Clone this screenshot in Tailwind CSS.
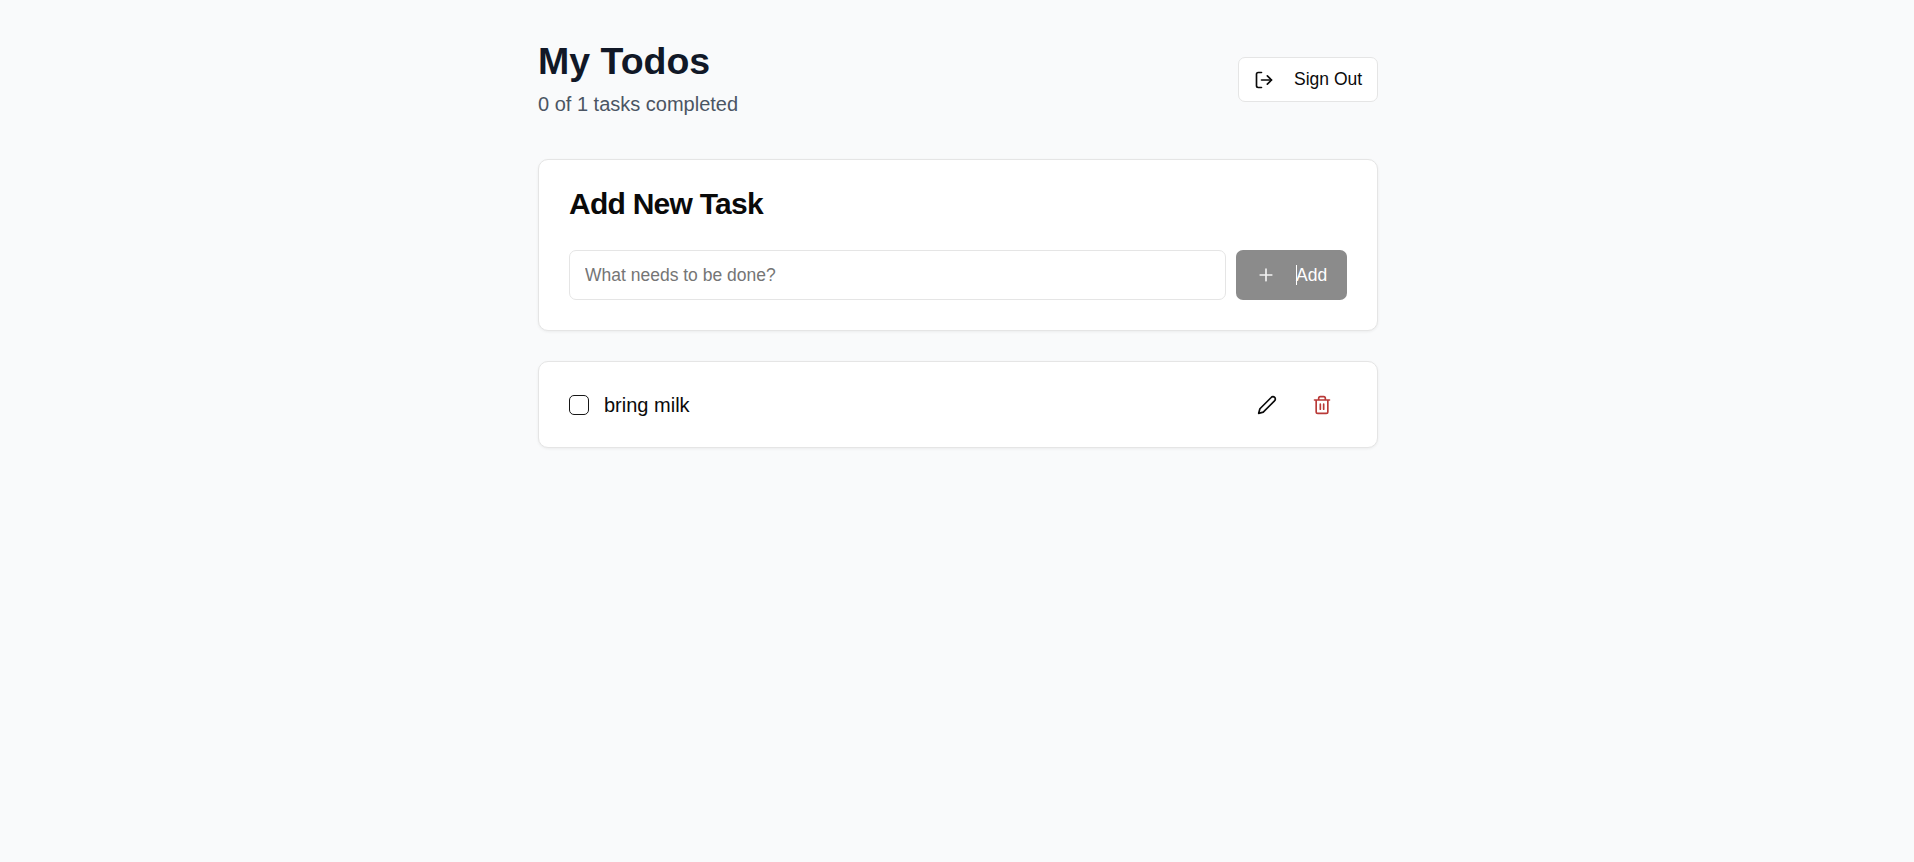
<!DOCTYPE html>
<html lang="en">
<head>
<meta charset="utf-8">
<title>My Todos</title>
<script src="https://cdn.jsdelivr.net/npm/@tailwindcss/browser@4"></script>
</head>
<body class="min-h-screen bg-[#f9fafb] font-['Liberation_Sans',Arial,sans-serif] text-[#0a0a0a]">
<main class="mx-auto w-[840px] translate-x-px pt-[39px]">
  <header class="mb-10 flex h-20 items-center justify-between">
    <div>
      <h1 class="text-[37.5px] font-bold leading-[44px] text-[#111827]">My Todos</h1>
      <p class="mt-[6px] text-[20px] leading-[30px] text-[#4b5563]">0 of 1 tasks completed</p>
    </div>
    <button class="mt-px flex h-[45px] w-[140px] items-center rounded-[7px] border border-[#e5e5e5] bg-white pl-[15px] text-[17.5px]">
      <svg class="size-5" viewBox="0 0 24 24" fill="none" stroke="currentColor" stroke-width="2" stroke-linecap="round" stroke-linejoin="round"><path d="M9 21H5a2 2 0 0 1-2-2V5a2 2 0 0 1 2-2h4"/><path d="m16 17 5-5-5-5"/><path d="M21 12H9"/></svg>
      <span class="ml-5">Sign Out</span>
    </button>
  </header>
  <section class="h-[172px] rounded-[10px] border border-[#e5e5e5] bg-white px-[30px] pt-[29px] shadow-[0_1px_3px_rgba(0,0,0,0.06)]">
    <h2 class="text-[30px] font-bold leading-[30px] tracking-[-0.75px]">Add New Task</h2>
    <form class="mt-[31px] flex gap-[10px]">
      <input class="h-[50px] min-w-0 flex-1 rounded-[7px] border border-[#e5e5e5] bg-white px-[15px] text-[17.5px] placeholder:text-[#757575]" placeholder="What needs to be done?">
      <button type="button" class="flex h-[50px] w-[111px] items-center rounded-[7px] bg-[#8b8b8b] pl-5 text-[17.5px] text-white">
        <svg class="size-5" viewBox="0 0 24 24" fill="none" stroke="#f3f3f3" stroke-width="2" stroke-linecap="round"><path d="M5 12h14M12 5v14"/></svg>
        <span class="relative ml-5">Add<span class="absolute left-0 top-[3px] h-5 w-px bg-white"></span></span>
      </button>
    </form>
  </section>
  <section class="mt-[30px] flex h-[87px] items-center rounded-[10px] border border-[#e5e5e5] bg-white px-[30px] pt-px shadow-[0_1px_3px_rgba(0,0,0,0.06)]">
    <span role="checkbox" aria-checked="false" class="size-5 rounded-[5px] border border-[#171717]"></span>
    <span class="ml-[15px] flex-1 text-[20px] leading-[30px]">bring milk</span>
    <button class="flex h-[45px] w-[50px] items-center justify-center" aria-label="Edit">
      <svg class="size-5" viewBox="0 0 24 24" fill="none" stroke="currentColor" stroke-width="2" stroke-linecap="round" stroke-linejoin="round"><path d="M17 3a2.85 2.83 0 1 1 4 4L7.500 20.500 2 22l1.500-5.500Z"/></svg>
    </button>
    <button class="ml-[5px] flex h-[45px] w-[50px] items-center justify-center text-[#b93a38]" aria-label="Delete">
      <svg class="size-5" viewBox="0 0 24 24" fill="none" stroke="currentColor" stroke-width="2" stroke-linecap="round" stroke-linejoin="round"><path d="M3 6h18M19 6v14c0 1-1 2-2 2H7c-1 0-2-1-2-2V6M8 6V4c0-1 1-2 2-2h4c1 0 2 1 2 2v2M10 11v6M14 11v6"/></svg>
    </button>
  </section>
</main>
</body>
</html>
